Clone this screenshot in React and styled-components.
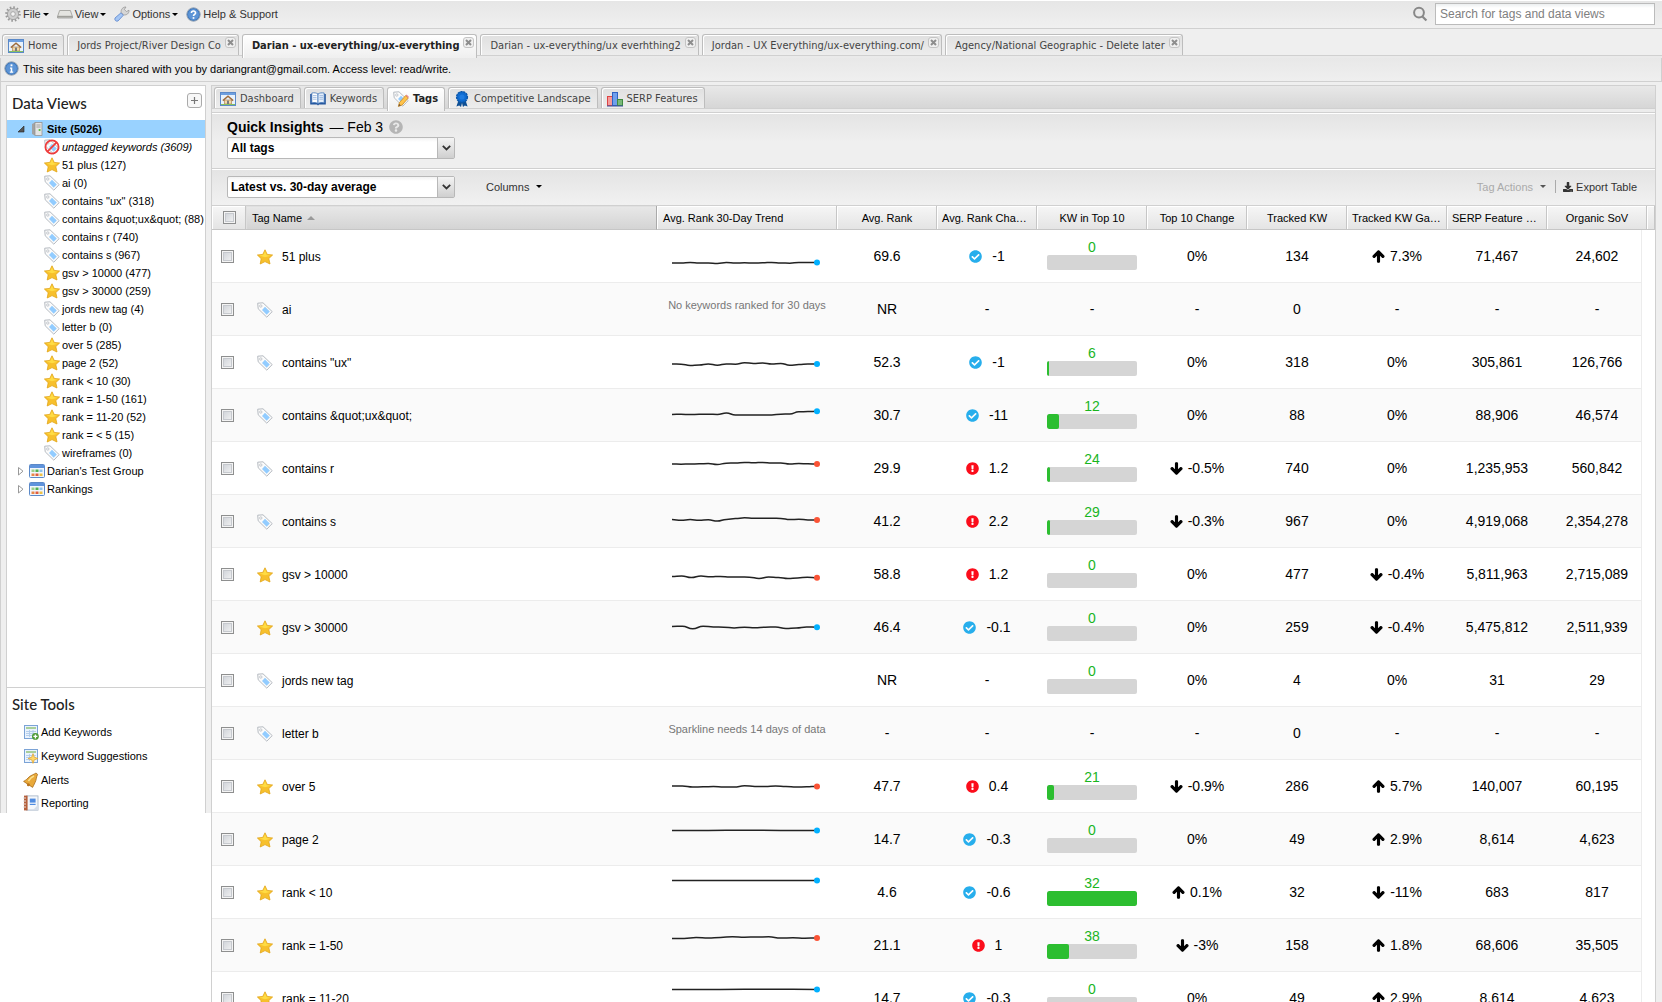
import React from "react";
import styled, { createGlobalStyle, css } from "styled-components";
import {
  FaArrowUp,
  FaArrowDown,
  FaCheckCircle,
  FaExclamationCircle,
  FaDownload,
  FaQuestionCircle,
} from "react-icons/fa";

const sans = '"Liberation Sans", Arial, Helvetica, sans-serif';
const tabFont = '"DejaVu Sans Condensed", "DejaVu Sans", Tahoma, sans-serif';
const line = "#d0d0d0";
const chrome = "#efefef";

const Global = createGlobalStyle`
  * { box-sizing: border-box; }
  body { margin: 0; background: #fff; font: 11px/16px ${sans}; color: #000; }
  button, select, input { font: inherit; color: inherit; margin: 0; }
  svg { display: block; flex: none; }
`;

const Page = styled.div`
  height: 100vh;
  overflow: hidden;
  display: flex;
  flex-direction: column;
`;

/* ---------- menu bar ---------- */
const MenuBar = styled.header`
  display: flex;
  align-items: center;
  flex: none;
  height: 29px;
  padding: 0 7px 1px 5px;
  background: linear-gradient(#e6e6e6, #f0f0f0);
  border-top: 1px solid #fff;
  border-bottom: 1px solid ${line};
`;
const MenuButton = styled.button`
  display: flex;
  align-items: center;
  gap: 2px;
  padding: 0;
  margin-right: ${(p) => p.$after || 0}px;
  border: 0;
  background: none;
  color: #333;
  white-space: nowrap;
`;
const Caret = styled.span`
  width: 0;
  height: 0;
  margin-left: ${(p) => p.$gap || 0}px;
  border: 3px solid transparent;
  border-top-color: ${(p) => p.$color || "#000"};
  border-bottom: 0;
`;
const Search = styled.label`
  display: flex;
  align-items: center;
  gap: 7px;
  margin-left: auto;
`;
const SearchInput = styled.input`
  width: 220px;
  height: 22px;
  padding: 0 4px;
  border: 1px solid #bbb;
  border-radius: 0;
  background: linear-gradient(#eceff0, #fff 4px);
  font-size: 12px;
  &::placeholder { color: #808080; opacity: 1; }
`;

/* ---------- tabs ---------- */
const TabStrip = styled.nav`
  display: flex;
  align-items: flex-start;
  gap: 3px;
  flex: none;
  font-family: ${tabFont};
`;
const SiteTabs = styled(TabStrip)`
  height: 29px;
  padding: 5px 2px 0;
  background: linear-gradient(${chrome} 26px, ${line} 26px, ${line} 27px, #eaeaea 27px);
`;
const PageTabs = styled(TabStrip)`
  height: 27px;
  padding: 1px 2px 0;
  background: linear-gradient(#e8e8e8, #d6d6d6 22px, ${line} 22px, ${line} 23px, #ececec 23px);
  border-bottom: 1px solid ${line};
`;
const Tab = styled.div`
  display: flex;
  height: 21px;
  border: 1px solid #bdbdbd;
  border-width: 1px 1px 0;
  border-radius: 3px 3px 0 0;
  box-shadow: inset 1px 1px 0 #fff;
  background: linear-gradient(#e0e0e0, #ededed);
  ${(p) =>
    p.$active &&
    css`
      height: 24px;
      background: linear-gradient(#fff, ${chrome});
      font-weight: bold;
    `}
`;
const TabLabel = styled.button`
  display: flex;
  align-items: center;
  gap: 4px;
  height: 21px;
  padding: 0 ${(p) => (p.$closable ? 4 : 6)}px 0 ${(p) => (p.$icon ? 5 : 9)}px;
  border: 0;
  background: none;
  color: ${(p) => (p.$active ? "#222" : "#444")};
  white-space: nowrap;
`;
const CloseButton = styled.button`
  display: grid;
  place-items: center;
  width: 11px;
  height: 11px;
  margin: 2px 2px 0 0;
  padding: 0;
  border: 1px solid #c4c4c4;
  border-radius: 3px;
  background: #f0f0f0;
`;

const InfoBar = styled.div`
  display: flex;
  align-items: center;
  gap: 4px;
  flex: none;
  height: 24px;
  padding: 0 4px 2px 3px;
  background: linear-gradient(#e8e8e8, #efefef);
  border: 1px solid ${line};
  border-top: 0;
`;

/* ---------- body ---------- */
const Body = styled.div`
  display: flex;
  align-items: flex-start;
  flex: 1;
  min-height: 0;
`;
const SidebarFrame = styled.aside`
  flex: none;
  width: 211px;
  padding: 3px 5px 0 5px;
  background: ${chrome};
  border-left: 1px solid ${line};
`;
const Sidebar = styled.div`
  background: #fff;
  border: 1px solid ${line};
  border-bottom: 0;
`;
const SideHead = styled.div`
  display: flex;
  align-items: center;
  justify-content: space-between;
  height: ${(p) => (p.$compact ? 32 : 34)}px;
  padding: 0 3px 0 5px;
`;
const SideTitle = styled.h2`
  margin: 0;
  font: 500 15px/20px Lato, "Open Sans", sans-serif;
  color: #222;
`;
const AddButton = styled.button`
  display: grid;
  place-items: center;
  width: 15px;
  height: 15px;
  padding: 0;
  margin-bottom: 6px;
  border: 1px solid #aaa;
  border-radius: 3px;
  background: #f7f7f7;
`;
const Tree = styled.ul`
  min-height: 567px;
  margin: 0;
  padding: 0;
  list-style: none;
`;
const TreeRow = styled.li`
  display: flex;
  align-items: center;
  gap: 2px;
  height: 18px;
  padding-left: ${(p) => (p.$nested ? 37 : 10)}px;
  white-space: nowrap;
  font-weight: ${(p) => (p.$selected ? "bold" : "normal")};
  font-style: ${(p) => (p.$italic ? "italic" : "normal")};
  background: ${(p) => (p.$selected ? "#99d2ff" : "none")};
`;
const Tools = styled.section`
  border-top: 1px solid ${line};
`;
const ToolList = styled.ul`
  margin: 0;
  padding: 0 0 0 16px;
  list-style: none;
`;
const ToolItem = styled.li`
  display: flex;
  align-items: center;
  height: 24px;
  &:last-child { height: 21px; }
`;
const ToolLink = styled.a`
  display: flex;
  align-items: center;
  gap: 2px;
  color: #000;
  text-decoration: none;
`;

const Main = styled.main`
  flex: 1;
  min-width: 0;
  border-top: 3px solid ${chrome};
  border-right: 6px solid ${chrome};
`;
const Panel = styled.div`
  border: 1px solid ${line};
  border-bottom: 0;
`;
const Insights = styled.section`
  height: 56px;
  padding: 4px 15px 0;
  background: linear-gradient(#e4e4e4, ${chrome} 28px);
  border-top: 1px solid #fff;
  border-bottom: 1px solid ${line};
`;
const InsightsTitle = styled.h1`
  display: flex;
  align-items: center;
  gap: 6px;
  margin: 0 0 1px;
  font-size: 14px;
  line-height: 18px;
  font-weight: normal;
`;
const Toolbar = styled.div`
  display: flex;
  align-items: center;
  height: 37px;
  padding: 0 18px 2px 15px;
  background: linear-gradient(#e4e4e4, #f1f1f1);
  border-top: 1px solid #fff;
  border-bottom: 1px solid ${line};
`;
const SelectBox = styled.div`
  display: grid;
  grid-template-columns: 1fr 17px;
  width: 228px;
  height: 22px;
  border: 1px solid #b8b8b8;
  border-radius: 2px;
  background: linear-gradient(#f2f2f2, #fff 4px);
`;
const Select = styled.select`
  grid-column: 1 / 3;
  grid-row: 1;
  appearance: none;
  width: 100%;
  height: 20px;
  padding: 0 3px;
  border: 0;
  background: none;
  font-size: 12px;
  font-weight: bold;
`;
const SelectArrow = styled.span`
  grid-column: 2;
  grid-row: 1;
  display: grid;
  place-items: center;
  border-left: 1px solid #b8b8b8;
  background: linear-gradient(#f4f4f4, #cfcfcf);
  pointer-events: none;
`;
const ToolButton = styled.button`
  display: flex;
  align-items: center;
  gap: 3px;
  padding: 0;
  margin-left: ${(p) => p.$before || 0}px;
  border: 0;
  background: none;
  color: ${(p) => (p.disabled ? "#aaa" : "#333")};
`;
const Right = styled.div`
  display: flex;
  align-items: center;
  margin-left: auto;
`;
const Divider = styled.span`
  width: 1px;
  height: 13px;
  margin: 0 7px 0 9px;
  background: #aaa;
`;

/* ---------- table ---------- */
const Table = styled.table`
  width: 100%;
  table-layout: fixed;
  border-collapse: separate;
  border-spacing: 0;
`;
const Th = styled.th`
  height: 24px;
  padding: 0 4px 0 ${(p) => (p.$align ? 6 : 5)}px;
  overflow: hidden;
  text-overflow: ellipsis;
  white-space: nowrap;
  font-weight: normal;
  text-align: ${(p) => p.$align || "center"};
  background: ${(p) =>
    p.$sorted ? "linear-gradient(#e8e8e8, #d4d4d4)" : "linear-gradient(#f6f6f6, #e4e4e4)"};
  border: 0 solid #c6c6c6;
  border-right: 1px solid ${(p) => (p.$sorted ? "#aaa" : "#c6c6c6")};
  border-bottom: 1px solid #c6c6c6;
  box-shadow: inset 1px 1px 0 ${(p) => (p.$sorted ? "#e0e0e0" : "#fff")};
`;
const SortMark = styled.span`
  display: inline-block;
  margin: 0 0 2px 5px;
  border: 4px solid transparent;
  border-top: 0;
  border-bottom-color: #999;
  vertical-align: middle;
`;
const Tr = styled.tr`
  background: ${(p) => (p.$odd ? "#fafafa" : "#fff")};
`;
const Td = styled.td`
  height: 53px;
  padding: 0;
  text-align: center;
  vertical-align: middle;
  font-size: 14px;
  border-bottom: 1px solid #ececec;
`;
const CheckTd = styled(Td)`
  padding-right: 4px;
`;
const MeterTd = styled(Td)`
  padding-bottom: 3px;
`;
const LastTd = styled(Td)`
  padding-left: 6px;
  border-right: 1px solid #ececec;
`;
const Gutter = styled.td`
  padding: 0;
  background: #fff;
`;
const Check = styled.input.attrs({ type: "checkbox" })`
  appearance: none;
  display: block;
  width: 13px;
  height: 13px;
  margin: 0 auto;
  border: 1px solid #8e8f8f;
  box-shadow: inset 0 0 0 1px #f4f4f4, inset 0 0 0 2px #c6c9ce;
  background: linear-gradient(135deg, #cbcfd5, #f6f6f6);
`;
const NameCell = styled.div`
  display: flex;
  align-items: center;
  gap: 9px;
  padding: 1px 0 0 11px;
  font-size: 12px;
`;
const Delta = styled.div`
  display: flex;
  align-items: center;
  justify-content: center;
  gap: ${(p) => p.$gap}px;
`;
const Bar = styled.div`
  width: 90px;
  height: 15px;
  margin: 0 auto;
  border-radius: 2px;
  background: #d5d5d5;
  overflow: hidden;
`;
const Fill = styled.div`
  height: 100%;
  background: #2cbe30;
  border-radius: 2px;
`;
const Count = styled.div`
  color: #19b51e;
  line-height: 16px;
`;
const Note = styled.div`
  padding-bottom: 8px;
  font-size: 11px;
  color: #777;
`;

/* ---------- icons ---------- */
const Svg = ({ children, size = 16 }) => (
  <svg width={size} height={size} viewBox="0 0 16 16" aria-hidden="true">
    {children}
  </svg>
);
const Star = () => (
  <Svg>
    <path d="M8 .8 10.2 5.4 15.6 6 11.8 9.6 13 15 8 12.6 3.2 15 4.2 9.7 .4 6 5.8 5.4Z" fill="#f7c02c" stroke="#e2a417" strokeWidth=".8" strokeLinejoin="round" />
    <path d="M8 2.2 9.6 6 13.8 6.7 8 8.2 2.2 6.6 6.2 6Z" fill="#ffdc44" />
  </Svg>
);
const TagShape = () => (
  <>
    <path d="M.7 1.2 6 .8 15.2 9.6 9.8 15.2 1.2 6.8Z" fill="#fbfbfb" stroke="#b5bac0" />
    <circle cx="3.8" cy="4" r="1.2" fill="#fff" stroke="#b5bac0" strokeWidth=".8" />
    <path d="M8 4.8 12.8 9.5 9.7 12.7 5 8Z" fill="#92ccff" />
  </>
);
const TagIcon = () => <Svg><TagShape /></Svg>;
const Untagged = () => (
  <Svg>
    <TagShape />
    <circle cx="8" cy="8" r="6.6" fill="none" stroke="#ee3b3b" strokeWidth="1.8" />
    <path d="M12.6 3.4 3.4 12.6" stroke="#ee3b3b" strokeWidth="1.8" />
  </Svg>
);
const TagEdit = () => (
  <Svg>
    <TagShape />
    <path d="M5.4 15.4 6.4 11.6 12.6 4.6 15.2 7 9.2 14Z" fill="#ffc34a" stroke="#c98a22" strokeWidth=".8" />
    <path d="M5.4 15.4 6.1 12.8 8 14.6Z" fill="#7a5a3a" />
    <path d="M12.6 4.6 13.6 3.6 16 6 15.2 7Z" fill="#e88a8a" />
  </Svg>
);
const Gear = () => (
  <Svg>
    <circle cx="8" cy="8" r="6.6" fill="none" stroke="#999" strokeWidth="2.4" strokeDasharray="1.6 1.86" />
    <circle cx="8" cy="8" r="4" fill="none" stroke="#cecece" strokeWidth="3.4" />
    <circle cx="8" cy="8" r="5.6" fill="none" stroke="#909090" strokeWidth=".7" />
    <circle cx="8" cy="8" r="2.3" fill="#f4f4f4" stroke="#909090" strokeWidth=".7" />
  </Svg>
);
const Drive = () => (
  <Svg>
    <path d="M2.6 4.5H13.4L15.4 10.4H.6Z" fill="#e4e4e0" stroke="#9a9a96" strokeWidth=".8" />
    <path d="M.6 10.4H15.4V12H.6Z" fill="#c5c5c0" stroke="#8e8e8a" strokeWidth=".7" />
  </Svg>
);
const Wrench = () => (
  <Svg>
    <path d="M7.2 6.6C6.6 3.6 8.8 .8 12 1L10.4 3.4 12.4 5.6 15 4.2C15.4 7.2 12.6 9.6 9.6 8.8Z" fill="#d6d6d6" stroke="#8f8f8f" strokeWidth=".7" />
    <path d="M7 6.8 9.4 9.2 4 15C2 15.8 .2 14 1 12Z" fill="#a5c6f4" stroke="#5a84cc" strokeWidth=".8" />
  </Svg>
);
const Badge = ({ children }) => (
  <Svg size={15}>
    <circle cx="8" cy="8" r="7.2" fill="#3f78bd" stroke="#9aa6b4" />
    <circle cx="8" cy="8" r="5.8" fill="#5c94d6" />
    {children}
  </Svg>
);
const Help = () => (
  <Badge>
    <path d="M5.8 6.4C5.8 3.6 10.3 3.7 10.2 6.3 10.2 7.8 8 7.8 8 9.6" fill="none" stroke="#fff" strokeWidth="1.7" />
    <rect x="7.1" y="10.8" width="1.8" height="1.8" fill="#fff" />
  </Badge>
);
const Info = () => (
  <Badge>
    <rect x="7" y="3.6" width="2" height="2" fill="#fff" />
    <path d="M6.4 7H8.8V11.2H9.8V12.4H6.2V11.2H7.2V8.2H6.4Z" fill="#fff" />
  </Badge>
);
const Home = () => (
  <Svg>
    <rect x=".5" y="1.5" width="15" height="13" fill="#e8f2fc" stroke="#5b89c8" />
    <rect x="1" y="2" width="14" height="2" fill="#6d9fe0" />
    <path d="M4.5 9H11.5V13H4.5Z" fill="#f3d9a8" stroke="#a8763c" strokeWidth=".6" />
    <path d="M2.8 9.6 8 5.2 13.2 9.6" fill="none" stroke="#a06c3c" strokeWidth="1.4" />
    <rect x="7" y="9.6" width="2" height="3.4" fill="#7a7a7a" />
    <path d="M1 13H15V14H1Z" fill="#86c060" />
  </Svg>
);
const Book = () => (
  <Svg>
    <path d="M.2 3H15.8V13.6H9L8 14.6 7 13.6H.2Z" fill="#22549c" />
    <path d="M1.8 2C4.2 1.6 6.4 1.8 8 3V12.6C6 11.4 4 11.4 1.8 12Z" fill="#fff" stroke="#3f73b8" strokeWidth=".8" />
    <path d="M14.2 2C11.8 1.6 9.6 1.8 8 3V12.6C10 11.4 12 11.4 14.2 12Z" fill="#e4eefa" stroke="#3f73b8" strokeWidth=".8" />
    <path d="M3 4.6H6.6M3 6.4H6.6M3 8.2H6.6M9.4 4.6H13M9.4 6.4H13M9.4 8.2H13" stroke="#8fb0da" strokeWidth=".8" />
  </Svg>
);
const Ribbon = () => (
  <Svg>
    <path d="M4.6 9 2.4 15.6 5.2 14.6 7 16 8 12 9 16 10.8 14.6 13.6 15.6 11.4 9Z" fill="#0e4f94" />
    <circle cx="8" cy="6" r="5.4" fill="#0f6bd0" stroke="#0b56a8" strokeWidth="1.4" strokeDasharray="2.2 .7" />
    <circle cx="8" cy="6" r="2.6" fill="#1f7ce0" />
  </Svg>
);
const Chart = () => (
  <Svg>
    <rect x=".5" y="5.5" width="5" height="9" fill="#f59a9a" stroke="#d44" />
    <rect x="5.5" y="1.5" width="5" height="13" fill="#6f9fec" stroke="#2f62c4" />
    <rect x="10.5" y="8.5" width="5" height="6" fill="#79b979" stroke="#3f8b3f" />
    <path d="M0 15H16" stroke="#3a4fa0" />
  </Svg>
);
const Server = () => (
  <Svg>
    <path d="M3 3 6 1.4H13V14.6H6L3 13Z" fill="#a2a2a2" />
    <rect x="6" y="1.4" width="7" height="13.2" fill="#e4e4e4" stroke="#8d8d8d" strokeWidth=".7" />
    <path d="M7.4 4H11.6M7.4 6H11.6" stroke="#999" strokeWidth=".9" />
    <circle cx="10.6" cy="9" r="1.1" fill="#54b83a" />
  </Svg>
);
const Group = () => (
  <Svg>
    <rect x=".5" y="1.5" width="15" height="13" rx="1" fill="#f1f6fc" stroke="#5b89c8" />
    <rect x="1" y="2" width="14" height="3" fill="#5f93dc" />
    <rect x="2.5" y="6.5" width="3" height="2.5" fill="#9ccf8c" />
    <rect x="6.5" y="6.5" width="3" height="2.5" fill="#4fb04f" />
    <rect x="10.5" y="6.5" width="3" height="2.5" fill="#8ec2ec" />
    <rect x="2.5" y="10.5" width="3" height="2.5" fill="#e88848" />
    <rect x="6.5" y="10.5" width="3" height="2.5" fill="#e05c3c" />
    <rect x="10.5" y="10.5" width="3" height="2.5" fill="#f0c244" />
  </Svg>
);
const SheetShape = () => (
  <>
    <rect x="1.5" y="1.5" width="13" height="13" fill="#eaf3fd" stroke="#7ba3d6" />
    <rect x="3" y="3" width="10" height="2" fill="#a9cf9a" />
    <path d="M3 7.5H13M3 9.5H13M3 11.5H13M6.5 6V13M10 6V13" stroke="#b0cbea" strokeWidth=".9" />
  </>
);
const SheetAdd = () => (
  <Svg>
    <SheetShape />
    <circle cx="12.4" cy="12.4" r="3.4" fill="#4d9a35" />
    <path d="M12.4 10.4V14.4M10.4 12.4H14.4" stroke="#fff" strokeWidth="1.4" />
  </Svg>
);
const SheetStar = () => (
  <Svg>
    <SheetShape />
    <path d="M10 5.6 11.3 9.2 15 10.5 11.3 11.8 10 15.4 8.7 11.8 5 10.5 8.7 9.2Z" fill="#ffd768" stroke="#e2a42c" strokeWidth=".7" />
  </Svg>
);
const Bell = () => (
  <Svg>
    <path d="M13 1C12 2 7 3.4 5 6 3.4 8 1.6 8.6.6 9.4L9.6 15.4C10.6 14 10.8 12.6 12 10.6 13.4 8 13.4 4.4 14.6 2.4Z" fill="#e9a93a" stroke="#a86c1c" strokeWidth=".8" />
    <path d="M11 4C8.6 5 7 6.4 5.4 9" fill="none" stroke="#fbe08c" strokeWidth="1.6" />
    <circle cx="5.4" cy="12.8" r="1.5" fill="#b9741c" />
  </Svg>
);
const Report = () => (
  <Svg>
    <rect x="3.5" y=".9" width="11.5" height="14.2" fill="#f4f7fb" stroke="#9fb0c4" strokeWidth=".8" />
    <rect x="1" y=".6" width="3.6" height="14.8" fill="#b5603c" />
    <path d="M0 3H3M0 6H3M0 9H3M0 12H3" stroke="#e6e0dc" />
    <rect x="6.8" y="3.6" width="5.8" height="4" fill="#4f8be0" />
    <path d="M6.8 9.4H12.6" stroke="#4f8be0" strokeWidth="1.2" />
    <path d="M10 15 15 10V15Z" fill="#d5dde8" />
  </Svg>
);
const Magnifier = () => (
  <Svg>
    <circle cx="7" cy="6.6" r="4.9" fill="none" stroke="#888" strokeWidth="2" />
    <path d="M10.4 10.4 14.4 14.6" stroke="#888" strokeWidth="2.2" />
  </Svg>
);
const Cross = () => (
  <svg width="7" height="7" viewBox="0 0 7 7" aria-hidden="true">
    <path d="M1 1 6 6M6 1 1 6" stroke="#8d8d8d" strokeWidth="2" />
  </svg>
);
const Plus = () => (
  <svg width="9" height="9" viewBox="0 0 9 9" aria-hidden="true">
    <path d="M4.5 1V8M1 4.5H8" stroke="#777" strokeWidth="1.2" />
  </svg>
);
const Chevron = () => (
  <svg width="9" height="6" viewBox="0 0 9 6" aria-hidden="true">
    <path d="M.8 .8 4.5 4.4 8.2 .8" fill="none" stroke="#333" strokeWidth="1.8" />
  </svg>
);
const Twisty = ({ open }) => (
  <svg width="10" height="16" viewBox="0 0 10 16" aria-hidden="true">
    {open ? (
      <path d="M7 5V11H1Z" fill="#555" stroke="#222" strokeWidth=".6" />
    ) : (
      <path d="M1.5 4.5 6 8.2 1.5 12Z" fill="#fff" stroke="#999" />
    )}
  </svg>
);

/* ---------- data ---------- */
const siteTabs = [
  ["Home", false],
  ["Jords Project/River Design Co", true],
  ["Darian - ux-everything/ux-everything", true],
  ["Darian - ux-everything/ux everhthing2", true],
  ["Jordan - UX Everything/ux-everything.com/", true],
  ["Agency/National Geographic - Delete later", true],
];
const pageTabs = [
  ["Dashboard", Home],
  ["Keywords", Book],
  ["Tags", TagEdit],
  ["Competitive Landscape", Ribbon],
  ["SERP Features", Chart],
];
const tree = [
  ["51 plus (127)", Star],
  ["ai (0)", TagIcon],
  ['contains "ux" (318)', TagIcon],
  ["contains &quot;ux&quot; (88)", TagIcon],
  ["contains r (740)", TagIcon],
  ["contains s (967)", TagIcon],
  ["gsv > 10000 (477)", Star],
  ["gsv > 30000 (259)", Star],
  ["jords new tag (4)", TagIcon],
  ["letter b (0)", TagIcon],
  ["over 5 (285)", Star],
  ["page 2 (52)", Star],
  ["rank < 10 (30)", Star],
  ["rank = 1-50 (161)", Star],
  ["rank = 11-20 (52)", Star],
  ["rank = < 5 (15)", Star],
  ["wireframes (0)", TagIcon],
];
const tools = [
  ["Add Keywords", SheetAdd],
  ["Keyword Suggestions", SheetStar],
  ["Alerts", Bell],
  ["Reporting", Report],
];
const columns = [
  "Avg. Rank",
  "Avg. Rank Change",
  "KW in Top 10",
  "Top 10 Change",
  "Tracked KW",
  "Tracked KW Gained",
  "SERP Feature Count",
];
/* trend: heights of the line at even steps across the cell */
const rows = [
  { name: "51 plus", star: true, trend: [33, 33, 32.6, 33, 33, 33.4, 32.6, 33, 32.8, 33, 32.8, 32.4, 33, 33.2, 32.4, 32.4, 32.6], rank: "69.6", change: -1, kw: 0, fill: 0, top: 0, tracked: "134", gain: 7.3, serp: "71,467", sov: "24,602" },
  { name: "ai", note: "No keywords ranked for 30 days", rank: "NR", tracked: "0" },
  { name: 'contains "ux"', trend: [28, 28.2, 29.4, 29, 28, 29.2, 28, 28.2, 26.8, 27.4, 27, 28, 27.4, 29.2, 28.6, 28, 28], rank: "52.3", change: -1, kw: 6, fill: 2, top: 0, tracked: "318", gain: 0, serp: "305,861", sov: "126,766" },
  { name: "contains &quot;ux&quot;", trend: [25.4, 25.2, 25.6, 25.2, 25.2, 25.4, 24, 26, 26, 26, 26, 26, 25.2, 25, 22.8, 22.6, 22.2], rank: "30.7", change: -11, kw: 12, fill: 12, top: 0, tracked: "88", gain: 0, serp: "88,906", sov: "46,574" },
  { name: "contains r", trend: [22, 22.2, 22, 21.8, 21.6, 22.6, 21.2, 21, 20.4, 20.8, 20.4, 21, 21, 22, 21.6, 21.8, 22], rank: "29.9", change: 1.2, kw: 24, fill: 3, top: -0.5, tracked: "740", gain: 0, serp: "1,235,953", sov: "560,842" },
  { name: "contains s", trend: [24.6, 25.2, 24.6, 25.2, 24.8, 26, 24.4, 23.6, 22.8, 23.2, 23.2, 23.2, 23.4, 24.6, 24.2, 25, 25], rank: "41.2", change: 2.2, kw: 29, fill: 3, top: -0.3, tracked: "967", gain: 0, serp: "4,919,068", sov: "2,354,278" },
  { name: "gsv > 10000", star: true, trend: [28.4, 28, 29.6, 28, 28.8, 28.4, 29, 29, 29.2, 30.4, 29, 29.4, 30.4, 30, 29.2, 29.8], rank: "58.8", change: 1.2, kw: 0, fill: 0, top: 0, tracked: "477", gain: -0.4, serp: "5,811,963", sov: "2,715,089" },
  { name: "gsv > 30000", star: true, trend: [25.4, 25.2, 27.8, 25.2, 26, 26.2, 27, 26.2, 26.8, 26.2, 26, 27.4, 27, 26, 26.2], rank: "46.4", change: -0.1, kw: 0, fill: 0, top: 0, tracked: "259", gain: -0.4, serp: "5,475,812", sov: "2,511,939" },
  { name: "jords new tag", rank: "NR", kw: 0, fill: 0, top: 0, tracked: "4", gain: 0, serp: "31", sov: "29" },
  { name: "letter b", note: "Sparkline needs 14 days of data", rank: "-", tracked: "0" },
  { name: "over 5", star: true, trend: [26, 26, 27, 26.8, 26.6, 27, 27, 25.8, 26.4, 26.6, 26, 26.4, 27, 26.8, 26.4], rank: "47.7", change: 0.4, kw: 21, fill: 7, top: -0.9, tracked: "286", gain: 5.7, serp: "140,007", sov: "60,195" },
  { name: "page 2", star: true, trend: [17.5, 17.5, 17.2, 17.5, 17.5], rank: "14.7", change: -0.3, kw: 0, fill: 0, top: 0, tracked: "49", gain: 2.9, serp: "8,614", sov: "4,623" },
  { name: "rank < 10", star: true, trend: [14.5, 14.5], rank: "4.6", change: -0.6, kw: 32, fill: 90, top: 0.1, tracked: "32", gain: -11, serp: "683", sov: "817" },
  { name: "rank = 1-50", star: true, trend: [19.4, 19.4, 18.6, 19, 18.4, 17.8, 18.2, 18, 17.8, 19, 18.8, 19.2, 19], rank: "21.1", change: 1, kw: 38, fill: 22, top: -3, tracked: "158", gain: 1.8, serp: "68,606", sov: "35,505" },
  { name: "rank = 11-20", star: true, trend: [17.4, 17.4, 17.2, 17.4], rank: "14.7", change: -0.3, kw: 0, fill: 0, top: 0, tracked: "49", gain: 2.9, serp: "8,614", sov: "4,623" },
];

function Trend({ points, good }) {
  const step = 145 / (points.length - 1);
  const xy = points.map((y, i) => [15 + i * step, y]);
  let d = `M${xy[0][0]} ${xy[0][1]}`;
  for (let i = 1; i < xy.length; i++) {
    const mid = (xy[i - 1][0] + xy[i][0]) / 2;
    d += `C${mid} ${xy[i - 1][1]} ${mid} ${xy[i][1]} ${xy[i][0]} ${xy[i][1]}`;
  }
  const [x, y] = xy[xy.length - 1];
  return (
    <svg width="180" height="52" viewBox="0 0 180 52" role="img" aria-label="30-day trend">
      <path d={d} fill="none" stroke="#222" strokeWidth="1.5" />
      <circle cx={x} cy={y} r="3" fill={good ? "#00b0ff" : "#fa5335"} />
    </svg>
  );
}

function Percent({ value }) {
  if (value === undefined) return "-";
  if (value === 0) return "0%";
  const Arrow = value > 0 ? FaArrowUp : FaArrowDown;
  return (
    <Delta $gap={5}>
      <Arrow size={13} stroke="currentColor" strokeWidth="44" />
      <span>{value}%</span>
    </Delta>
  );
}

function Row({ row, odd }) {
  const good = row.change < 0;
  const Meter = row.kw === undefined ? Td : MeterTd;
  return (
    <Tr $odd={odd}>
      <CheckTd><Check aria-label={`Select ${row.name}`} /></CheckTd>
      <Td>
        <NameCell>
          {row.star ? <Star /> : <TagIcon />}
          <span>{row.name}</span>
        </NameCell>
      </Td>
      <Td>
        {row.trend && <Trend points={row.trend} good={good} />}
        {row.note && <Note>{row.note}</Note>}
      </Td>
      <Td>{row.rank}</Td>
      <Td>
        {row.change === undefined ? "-" : (
          <Delta $gap={10}>
            {good ? <FaCheckCircle size={13} color="#27aeec" /> : <FaExclamationCircle size={13} color="#fb0d1b" />}
            <span>{row.change}</span>
          </Delta>
        )}
      </Td>
      <Meter>
        {row.kw === undefined ? "-" : (
          <>
            <Count>{row.kw}</Count>
            <Bar><Fill style={{ width: row.fill }} /></Bar>
          </>
        )}
      </Meter>
      <Td><Percent value={row.top} /></Td>
      <Td>{row.tracked}</Td>
      <Td><Percent value={row.gain} /></Td>
      <Td>{row.serp || "-"}</Td>
      <LastTd>{row.sov || "-"}</LastTd>
      <Gutter colSpan={2} />
    </Tr>
  );
}

export default function App() {
  return (
    <Page>
      <Global />
      <MenuBar>
        <MenuButton $after={8}><Gear />File<Caret /></MenuButton>
        <MenuButton $after={8}><Drive />View<Caret /></MenuButton>
        <MenuButton $after={8}><Wrench />Options<Caret /></MenuButton>
        <MenuButton><Help />Help &amp; Support</MenuButton>
        <Search>
          <Magnifier />
          <SearchInput type="search" placeholder="Search for tags and data views" aria-label="Search" />
        </Search>
      </MenuBar>

      <SiteTabs aria-label="Sites">
        {siteTabs.map(([label, closable], i) => (
          <Tab key={label} $active={i === 2}>
            <TabLabel $icon={i === 0} $closable={closable} $active={i === 2}>
              {i === 0 && <Home />}
              {label}
            </TabLabel>
            {closable && <CloseButton aria-label={`Close ${label}`}><Cross /></CloseButton>}
          </Tab>
        ))}
      </SiteTabs>

      <InfoBar>
        <Info />
        This site has been shared with you by dariangrant@gmail.com. Access level: read/write.
      </InfoBar>

      <Body>
        <SidebarFrame>
          <Sidebar>
            <SideHead>
              <SideTitle>Data Views</SideTitle>
              <AddButton aria-label="Add data view"><Plus /></AddButton>
            </SideHead>
            <Tree>
              <TreeRow $selected><Twisty open /><Server />Site (5026)</TreeRow>
              <TreeRow $nested $italic><Untagged />untagged keywords (3609)</TreeRow>
              {tree.map(([label, Icon]) => (
                <TreeRow key={label} $nested><Icon />{label}</TreeRow>
              ))}
              <TreeRow><Twisty /><Group />Darian's Test Group</TreeRow>
              <TreeRow><Twisty /><Group />Rankings</TreeRow>
            </Tree>
            <Tools>
              <SideHead $compact><SideTitle>Site Tools</SideTitle></SideHead>
              <ToolList>
                {tools.map(([label, Icon]) => (
                  <ToolItem key={label}><ToolLink href="#"><Icon />{label}</ToolLink></ToolItem>
                ))}
              </ToolList>
            </Tools>
          </Sidebar>
        </SidebarFrame>

        <Main>
          <Panel>
            <PageTabs aria-label="Site pages">
              {pageTabs.map(([label, Icon], i) => (
                <Tab key={label} $active={i === 2}>
                  <TabLabel $icon $active={i === 2}><Icon />{label}</TabLabel>
                </Tab>
              ))}
            </PageTabs>

            <Insights>
              <InsightsTitle>
                <strong>Quick Insights</strong>
                <span>— Feb 3</span>
                <FaQuestionCircle size={14} color="#b5b5b5" />
              </InsightsTitle>
              <SelectBox>
                <Select aria-label="Tags"><option>All tags</option></Select>
                <SelectArrow><Chevron /></SelectArrow>
              </SelectBox>
            </Insights>

            <Toolbar>
              <SelectBox>
                <Select aria-label="Period"><option>Latest vs. 30-day average</option></Select>
                <SelectArrow><Chevron /></SelectArrow>
              </SelectBox>
              <ToolButton $before={31}>Columns<Caret $gap={4} /></ToolButton>
              <Right>
                <ToolButton disabled>Tag Actions<Caret $gap={4} $color="#555" /></ToolButton>
                <Divider />
                <ToolButton><FaDownload size={10} />Export Table</ToolButton>
              </Right>
            </Toolbar>

            <Table>
              <colgroup>
                <col width="34" />
                <col />
                <col width="180" />
                <col width="100" />
                <col width="100" />
                <col width="110" />
                <col width="100" />
                <col width="100" />
                <col width="100" />
                <col width="100" />
                <col width="95" />
                <col width="5" />
                <col width="8" />
              </colgroup>
              <thead>
                <tr>
                  <Th><Check aria-label="Select all" /></Th>
                  <Th $align="left" $sorted>Tag Name<SortMark /></Th>
                  <Th $align="left">Avg. Rank 30-Day Trend</Th>
                  {columns.map((c) => <Th key={c}>{c}</Th>)}
                  <Th colSpan={2}>Organic SoV</Th>
                  <Th aria-hidden="true" />
                </tr>
              </thead>
              <tbody>
                {rows.map((row, i) => <Row key={row.name} row={row} odd={i % 2 === 1} />)}
              </tbody>
            </Table>
          </Panel>
        </Main>
      </Body>
    </Page>
  );
}
